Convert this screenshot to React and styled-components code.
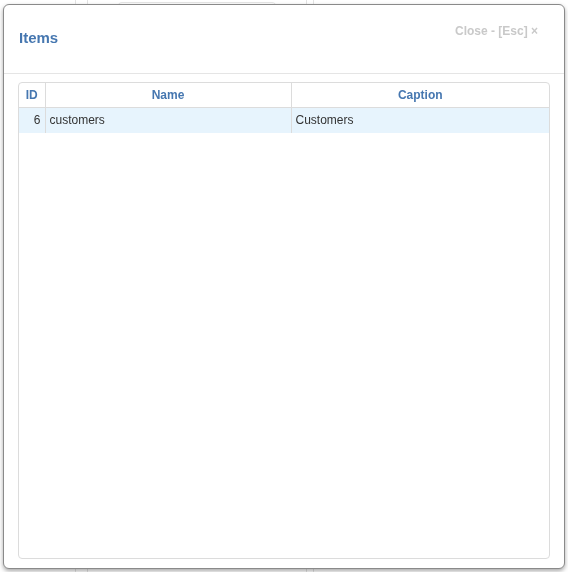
import React from "react";
import styled, { createGlobalStyle } from "styled-components";

const GlobalStyle = createGlobalStyle`
  html, body {
    margin: 0;
    padding: 0;
    background: #fff;
    font-family: "Liberation Sans", Arial, sans-serif;
  }
`;

// faint page lying behind the dialog
const Backdrop = styled.div`
  display: flex;
  align-items: flex-start;
  height: 572px;
  overflow: hidden;
`;

const Gap = styled.div`
  width: ${(props) => props.w}px;
  flex: none;
`;

const Rail = styled.div`
  width: ${(props) => props.w}px;
  height: 100%;
  flex: none;
  border-left: 1px solid #e3e3e3;
  border-right: 1px solid #e3e3e3;
`;

const Card = styled.div`
  width: 158px;
  height: 60px;
  flex: none;
  margin-top: 2px;
  border: 1px solid #e6e6e6;
  border-radius: 5px;
`;

const Dialog = styled.div`
  position: fixed;
  top: 4px;
  left: 3px;
  width: 560px;
  height: 563px;
  display: flex;
  flex-direction: column;
  background: #fff;
  border: 1px solid #8a8a8a;
  border-radius: 6px;
  box-shadow: 0 2px 4px rgba(0, 0, 0, 0.35);
`;

const Header = styled.div`
  display: flex;
  justify-content: space-between;
  align-items: flex-start;
  padding: 23px 15px 25px;
  border-bottom: 1px solid #e5e5e5;
`;

const Title = styled.h4`
  margin: 0;
  font-size: 15px;
  line-height: 20px;
  font-weight: bold;
  color: #4677b0;
`;

const Close = styled.span`
  margin: -4px 11px 0 0;
  font-size: 12px;
  line-height: 14px;
  font-weight: bold;
  color: #c9c9c9;
`;

const Body = styled.div`
  flex: 1;
  display: flex;
  padding: 8px 14px 9px 14px;
`;

const Grid = styled.div`
  flex: 1;
  border: 1px solid #dcdcdc;
  border-radius: 4px;
  overflow: hidden;
`;

const Table = styled.table`
  width: 100%;
  border-collapse: collapse;
  table-layout: fixed;
  font-size: 12px;
`;

const Th = styled.th`
  height: 24px;
  padding: 0 4px;
  font-weight: bold;
  color: #4677b0;
  text-align: center;
  border-bottom: 1px solid #dcdcdc;
  border-left: ${(props) => (props.first ? "none" : "1px solid #dcdcdc")};
`;

const Row = styled.tr`
  background: ${(props) => (props.selected ? "#e7f4fd" : "transparent")};
`;

const Td = styled.td`
  height: 24px;
  padding: 0 4px 1px;
  color: #333;
  text-align: ${(props) => props.align || "left"};
  border-left: ${(props) => (props.first ? "none" : "1px solid #dcdcdc")};
  white-space: nowrap;
  overflow: hidden;
`;

const columns = [
  { id: "id", title: "ID", width: 26, align: "right" },
  { id: "name", title: "Name", width: 246 },
  { id: "caption", title: "Caption" },
];

const rows = [{ id: 6, name: "customers", caption: "Customers" }];

const App = () => (
  <>
    <GlobalStyle />
    <Backdrop>
      <Gap w={75} />
      <Rail w={11} />
      <Gap w={29} />
      <Card />
      <Gap w={29} />
      <Rail w={6} />
    </Backdrop>

    <Dialog>
      <Header>
        <Title>Items</Title>
        <Close>Close - [Esc] ×</Close>
      </Header>
      <Body>
        <Grid>
          <Table>
            <colgroup>
              {columns.map((col) => (
                <col key={col.id} style={col.width ? { width: col.width } : undefined} />
              ))}
            </colgroup>
            <thead>
              <tr>
                {columns.map((col, i) => (
                  <Th key={col.id} first={i === 0}>
                    {col.title}
                  </Th>
                ))}
              </tr>
            </thead>
            <tbody>
              {rows.map((row) => (
                <Row key={row.id} selected>
                  {columns.map((col, i) => (
                    <Td key={col.id} first={i === 0} align={col.align}>
                      {row[col.id]}
                    </Td>
                  ))}
                </Row>
              ))}
            </tbody>
          </Table>
        </Grid>
      </Body>
    </Dialog>
  </>
);

export default App;
